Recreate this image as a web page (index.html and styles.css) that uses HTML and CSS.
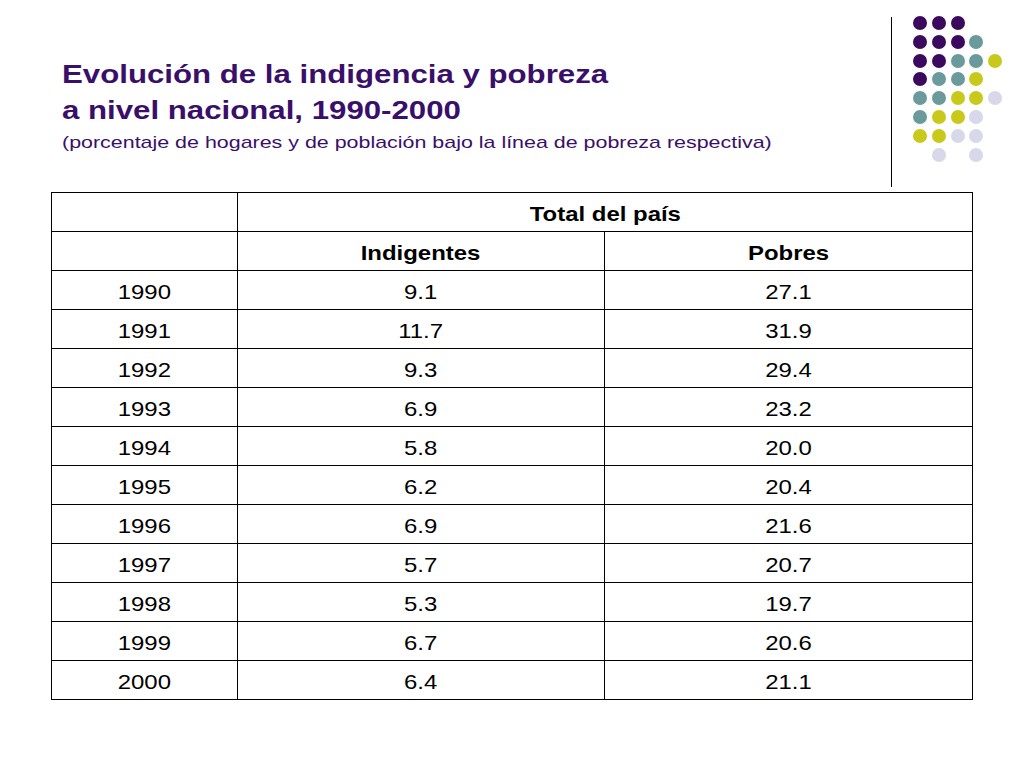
FILE: index.html
```html
<!DOCTYPE html>
<html lang="es">
<head>
<meta charset="utf-8">
<title>Evolución de la indigencia y pobreza</title>
<link rel="stylesheet" href="styles.css">
</head>
<body>
<div class="slide">
  <header class="head">
    <div class="titles">
      <h1 class="title">Evolución de la indigencia y pobreza<br>a nivel nacional, 1990-2000</h1>
      <p class="subtitle">(porcentaje de hogares y de población bajo la línea de pobreza respectiva)</p>
    </div>
    <div class="deco">
      <div class="vline"></div>
      <div class="dots">
        <span class="dot p"></span><span class="dot p"></span><span class="dot p"></span><span class="dot"></span><span class="dot"></span>
        <span class="dot p"></span><span class="dot p"></span><span class="dot p"></span><span class="dot t"></span><span class="dot"></span>
        <span class="dot p"></span><span class="dot p"></span><span class="dot t"></span><span class="dot t"></span><span class="dot y"></span>
        <span class="dot p"></span><span class="dot t"></span><span class="dot t"></span><span class="dot y"></span><span class="dot"></span>
        <span class="dot t"></span><span class="dot t"></span><span class="dot y"></span><span class="dot y"></span><span class="dot l"></span>
        <span class="dot t"></span><span class="dot y"></span><span class="dot y"></span><span class="dot l"></span><span class="dot"></span>
        <span class="dot y"></span><span class="dot y"></span><span class="dot l"></span><span class="dot l"></span><span class="dot"></span>
        <span class="dot"></span><span class="dot l"></span><span class="dot"></span><span class="dot l"></span><span class="dot"></span>
      </div>
    </div>
  </header>
  <table class="data">
    <colgroup><col class="c1"><col class="c2"><col class="c3"></colgroup>
    <thead>
      <tr><th></th><th colspan="2"><span class="s">Total del país</span></th></tr>
      <tr><th></th><th><span class="s">Indigentes</span></th><th><span class="s">Pobres</span></th></tr>
    </thead>
    <tbody>
      <tr><td><span class="s">1990</span></td><td><span class="s">9.1</span></td><td><span class="s">27.1</span></td></tr>
      <tr><td><span class="s">1991</span></td><td><span class="s">11.7</span></td><td><span class="s">31.9</span></td></tr>
      <tr><td><span class="s">1992</span></td><td><span class="s">9.3</span></td><td><span class="s">29.4</span></td></tr>
      <tr><td><span class="s">1993</span></td><td><span class="s">6.9</span></td><td><span class="s">23.2</span></td></tr>
      <tr><td><span class="s">1994</span></td><td><span class="s">5.8</span></td><td><span class="s">20.0</span></td></tr>
      <tr><td><span class="s">1995</span></td><td><span class="s">6.2</span></td><td><span class="s">20.4</span></td></tr>
      <tr><td><span class="s">1996</span></td><td><span class="s">6.9</span></td><td><span class="s">21.6</span></td></tr>
      <tr><td><span class="s">1997</span></td><td><span class="s">5.7</span></td><td><span class="s">20.7</span></td></tr>
      <tr><td><span class="s">1998</span></td><td><span class="s">5.3</span></td><td><span class="s">19.7</span></td></tr>
      <tr><td><span class="s">1999</span></td><td><span class="s">6.7</span></td><td><span class="s">20.6</span></td></tr>
      <tr><td><span class="s">2000</span></td><td><span class="s">6.4</span></td><td><span class="s">21.1</span></td></tr>
    </tbody>
  </table>
</div>
</body>
</html>
```
FILE: styles.css
```css
html, body {
  margin: 0;
  padding: 0;
  background: #ffffff;
}
.slide {
  width: 1024px;
  height: 768px;
  font-family: "Liberation Sans", Arial, sans-serif;
  color: #000;
}
.head {
  display: flex;
  height: 192px;
}
.titles {
  padding-left: 62px;
  padding-top: 56px;
}
.title {
  margin: 0;
  font-size: 26px;
  line-height: 36px;
  font-weight: bold;
  color: #3a0f6a;
  white-space: nowrap;
  transform: scaleX(1.2);
  transform-origin: left top;
}
.subtitle {
  margin: 4px 0 0;
  font-size: 17px;
  line-height: 22px;
  color: #3a0f6a;
  white-space: nowrap;
  transform: scaleX(1.26);
  transform-origin: left top;
}
.deco {
  margin-left: auto;
  display: flex;
  align-items: flex-start;
  padding-right: 22px;
}
.vline {
  width: 1px;
  height: 170px;
  margin-top: 17px;
  background: #000;
}
.dots {
  margin-left: 21px;
  margin-top: 16px;
  display: grid;
  grid-template-columns: repeat(5, 14px);
  grid-auto-rows: 14px;
  gap: 4.8px 4.7px;
}
.dot {
  width: 14px;
  height: 14px;
  border-radius: 50%;
}
.dot.p { background: #3b0a5f; }
.dot.t { background: #6a9a9c; }
.dot.y { background: #c9c91c; }
.dot.l { background: #d8d8ea; }
.data {
  margin-left: 51px;
  border-collapse: collapse;
  table-layout: fixed;
  width: 921px;
}
.c1 { width: 186px; }
.c2 { width: 367px; }
.c3 { width: 368px; }
.data th, .data td {
  border: 1px solid #000;
  height: 34px;
  padding: 4px 0 0;
  text-align: center;
  vertical-align: middle;
  font-size: 21px;
  line-height: 24px;
}
.data th {
  font-weight: bold;
}
.data td {
  font-weight: normal;
}
.s {
  display: inline-block;
  transform: scaleX(1.14);
}
```
